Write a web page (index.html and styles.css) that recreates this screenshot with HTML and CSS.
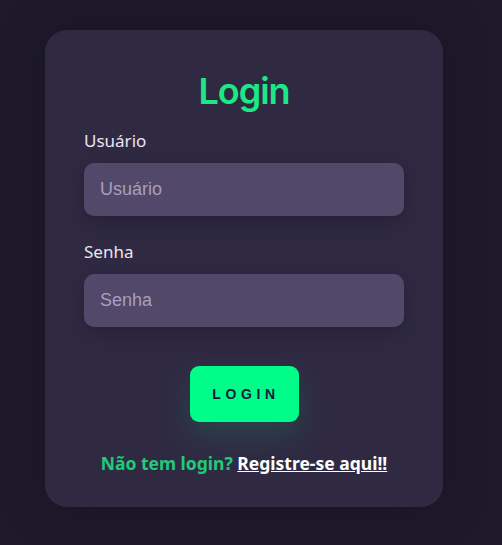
FILE: index.html
```html
<!DOCTYPE html>
<html lang="pt-BR">
<head>
<meta charset="utf-8">
<link rel="stylesheet" href="styles.css">
<title>Login</title>
</head>
<body>
<main class="page">
  <form class="card">
    <h1 class="title">Login</h1>
    <label class="label" for="user">Usuário</label>
    <input class="field" id="user" type="text" placeholder="Usuário">
    <label class="label label-second" for="pass">Senha</label>
    <input class="field" id="pass" type="password" placeholder="Senha">
    <div class="actions">
      <button class="btn" type="button">LOGIN</button>
    </div>
    <p class="register">Não tem login? <a href="#" class="register-link">Registre-se aqui!!</a></p>
  </form>
</main>
</body>
</html>
```

FILE: styles.css
```css
* { box-sizing: border-box; }
html, body { margin: 0; padding: 0; }
body {
  background: #1e1a2b;
  font-family: "Noto Sans", sans-serif;
  width: 502px;
  height: 545px;
  overflow: hidden;
}
.page {
  display: flex;
  justify-content: flex-start;
  padding: 30px 0 0 45px;
}
.card {
  width: 398px;
  height: 477px;
  background: #2f2a42;
  border-radius: 22px;
  padding: 39px 39px 0;
  display: flex;
  flex-direction: column;
  box-shadow: 0 0 40px rgba(20, 16, 32, 0.6);
}
.title {
  margin: 0 0 16px;
  text-align: center;
  font-family: "Inter", sans-serif;
  font-weight: 600;
  font-size: 36px;
  letter-spacing: -1px;
  line-height: 44px;
  color: #1ee886;
}
.label {
  color: #ece4f2;
  font-size: 17px;
  line-height: 24px;
  margin-bottom: 10px;
}
.label-second { margin-top: 24px; }
.field {
  width: 320px;
  height: 53px;
  border: none;
  border-radius: 10px;
  background: #524869;
  padding: 0 16px;
  font-family: "Liberation Sans", Arial, sans-serif;
  font-size: 18px;
  color: #ece4f2;
  outline: none;
  box-shadow: 0 6px 20px rgba(20, 16, 32, 0.35);
}
.field::placeholder { color: #a89fbb; }
.actions {
  display: flex;
  justify-content: center;
  margin-top: 39px;
}
.btn {
  width: 109px;
  height: 56px;
  border: none;
  border-radius: 9px;
  background: #00fd89;
  color: #1a1a40;
  font-family: "Liberation Sans", Arial, sans-serif;
  font-weight: 700;
  font-size: 14px;
  letter-spacing: 4.6px;
  padding: 0 0 0 4px;
  box-shadow: 0 14px 30px rgba(0, 253, 137, 0.12);
}
.register {
  margin: 29px 0 0;
  text-align: center;
  font-weight: 700;
  font-size: 17.5px;
  line-height: 24px;
  color: #1fcb7b;
}
.register-link {
  color: #ffffff;
  text-decoration: underline;
}
```
